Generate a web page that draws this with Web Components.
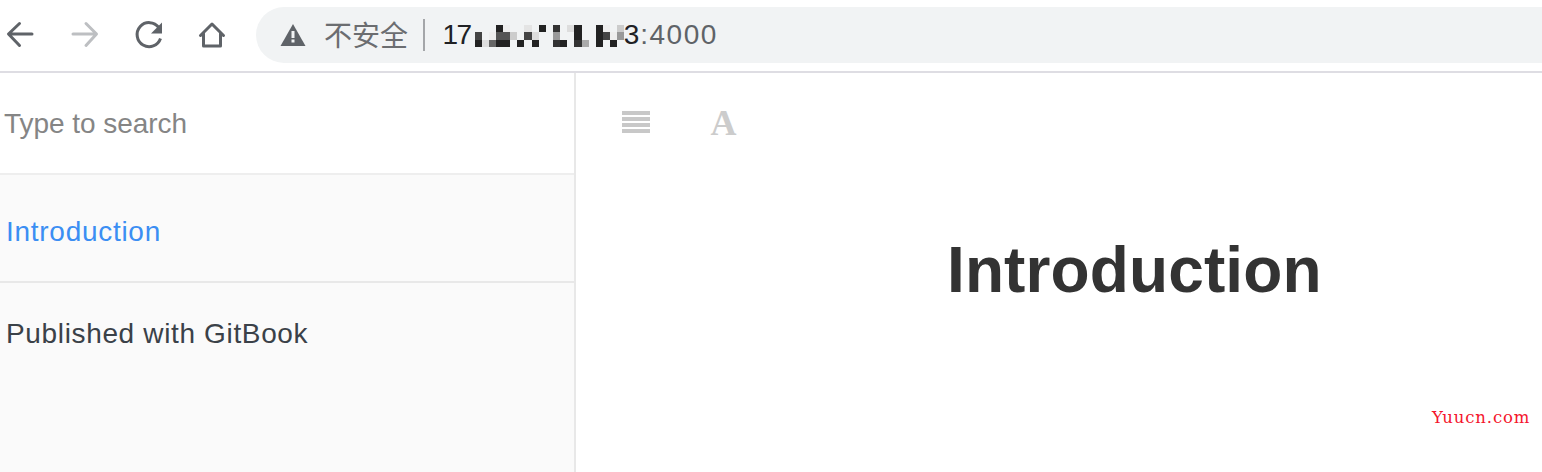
<!DOCTYPE html>
<html lang="zh"><head><meta charset="utf-8"><title>Introduction</title>
<style>
html,body{margin:0;padding:0;background:#fff;width:1542px;height:472px;overflow:hidden;font-family:"Liberation Sans",Arial,sans-serif}
</style></head><body>
<app-page>
  <browser-bar></browser-bar>
  <book-layout>
    <book-sidebar slot="side"></book-sidebar>
    <book-main slot="main"></book-main>
  </book-layout>
  <site-mark>Yuucn.com</site-mark>
</app-page>
<script>
function def(name, html){
  customElements.define(name, class extends HTMLElement{
    constructor(){super();this.attachShadow({mode:'open'}).innerHTML=html;}
  });
}
def('app-page',`<style>:host{display:flex;flex-direction:column;position:relative;width:1542px;height:472px;overflow:hidden}</style><slot></slot>`);

def('mosaic-block',`<style>:host{display:inline-grid;grid-template-columns:repeat(21,7.15px);grid-template-rows:7.4px 7.4px 7.4px;width:150.15px;height:22.2px}i{display:block}</style><div id="g" style="display:contents"></div>`);

def('browser-bar',`<style>
:host{display:flex;align-items:stretch;height:71px;border-bottom:2px solid #dedde3;background:#fff;box-sizing:content-box}
.nav{display:flex;align-items:flex-start;padding:0;width:256px;flex:none}
svg{display:block;flex:none}
.pill{flex:1;margin-top:7px;height:56px;background:#f1f3f4;border-radius:28px 0 0 28px;display:flex;align-items:center;padding-left:23.500px;font-size:28px;color:#5f6368;white-space:nowrap}
.warn{margin-right:18.500px}
.zh{font:28px/54px "Noto Sans CJK SC","Liberation Sans",sans-serif;color:#6b6d70;height:56px;width:84.500px}
.sep{width:2px;height:32px;background:#a4a6a9;margin:0 18px 0 14px;flex:none}
.host{color:#202124}
.first{letter-spacing:-1.500px;width:31px}
mosaic-block{margin:2px 0 0 1px;flex:none}
.port{letter-spacing:1.500px}
.three{margin-left:-1px;letter-spacing:1px}
</style>
<div class="nav">
<svg width="256" height="71" viewBox="0 0 256 71" fill="none" stroke-linecap="round" stroke-linejoin="round" stroke-width="3">
  <path d="M32 34H9M19.500 23.500 8.500 34 19.500 45.500" stroke="#5f6368"/>
  <path d="M73 34H96M86 23.500 96.500 34 86 45.500" stroke="#bdbfc2"/>
  <path d="M158.800 27.500A12 12 0 1 0 160.500 38.500" stroke="#5f6368" stroke-linecap="butt"/>
  <path d="M162 22.500V33.500H151Z" fill="#5f6368" stroke="none"/>
  <path d="M200.500 35.500 212 24 223.500 35.500M203.500 33.500V46H220.500V33.500" stroke="#5f6368"/>
</svg></div>
<div class="pill">
<svg class="warn" width="26" height="22" viewBox="0 0 26 22"><path d="M13 0 25.500 22H.5Z" fill="#5f6368"/><rect x="11.500" y="7" width="3" height="7" fill="#f1f3f4"/><rect x="11.500" y="15.500" width="3" height="3" fill="#f1f3f4"/></svg>
<span class="zh">不安全</span><span class="sep"></span><span class="host first">17</span><mosaic-block></mosaic-block><span class="host three">3</span><span class="port">:4000</span>
</div>`);

def('book-layout',`<style>:host{display:flex;flex:1;min-height:0}</style><slot name="side"></slot><slot name="main"></slot>`);

def('book-sidebar',`<style>
:host{display:flex;flex-direction:column;width:574px;flex:none;border-right:2px solid #e8e8e8;background:#fafafa;font-size:28px}
.search{background:#fff;border-bottom:2px solid #eee;display:flex;align-items:center;padding:2px 0 0 4px;box-sizing:border-box;height:102px;color:#858585;flex:none;letter-spacing:-.05px}
.intro{border-bottom:2px solid #e8e8e8;display:flex;align-items:center;padding:8px 0 0 6px;box-sizing:border-box;height:108px;color:#3b8ef3;flex:none;letter-spacing:.72px}
.pub{padding:35px 0 0 6px;color:#3a4148;line-height:32px;letter-spacing:.65px}
</style>
<div class="search">Type to search</div>
<div class="intro">Introduction</div>
<div class="pub">Published with GitBook</div>`);

def('book-main',`<style>
:host{display:flex;flex-direction:column;flex:1;background:#fff}
.tools{display:flex;align-items:center;height:100px;padding-left:46px;flex:none}
.bars{display:grid;grid-template-rows:repeat(4,4px);row-gap:2px;width:28px;margin-top:-2px}
.bars i{display:block;background:#c8c8c8}
.a{font:bold 36px "Liberation Serif",serif;color:#ccc;margin-left:60.500px;line-height:40px}
h1{margin:0;font:bold 64px/80px "Liberation Sans",sans-serif;color:#333;padding:57px 0 0 371px;white-space:nowrap;letter-spacing:.12px}
</style>
<div class="tools"><div class="bars"><i></i><i></i><i></i><i></i></div><span class="a">A</span></div>
<h1>Introduction</h1>`);

def('site-mark',`<style>:host{position:absolute;left:1432px;top:408px;font:16.500px/20px "DejaVu Serif",serif;color:#f4152c;letter-spacing:.85px}</style><slot></slot>`);

const cells=[
[0,'#444','#222'],[0,0,'#ddd'],[0,'#eee','#666'],['#222','#555','#222'],['#eee','#555','#222'],[0,'#ccc',0],[0,0,'#222'],
['#e4e4e4','#444',0],[0,'#ddd','#222'],['#222',0,0],[0,0,0],['#333','#999','#333'],[0,0,'#222'],['#ddd',0,0],
['#222','#222','#333'],[0,0,'#aaa'],[0,0,0],['#222','#222','#222'],['#eee','#444',0],[0,'#eee','#222'],['#ccc','#999',0]];
const g=document.querySelector('browser-bar').shadowRoot.querySelector('mosaic-block').shadowRoot.getElementById('g');
for(let r=0;r<3;r++)for(let c=0;c<21;c++){const i=document.createElement('i');if(cells[c][r])i.style.background=cells[c][r];g.appendChild(i);}
</script>
</body></html>
